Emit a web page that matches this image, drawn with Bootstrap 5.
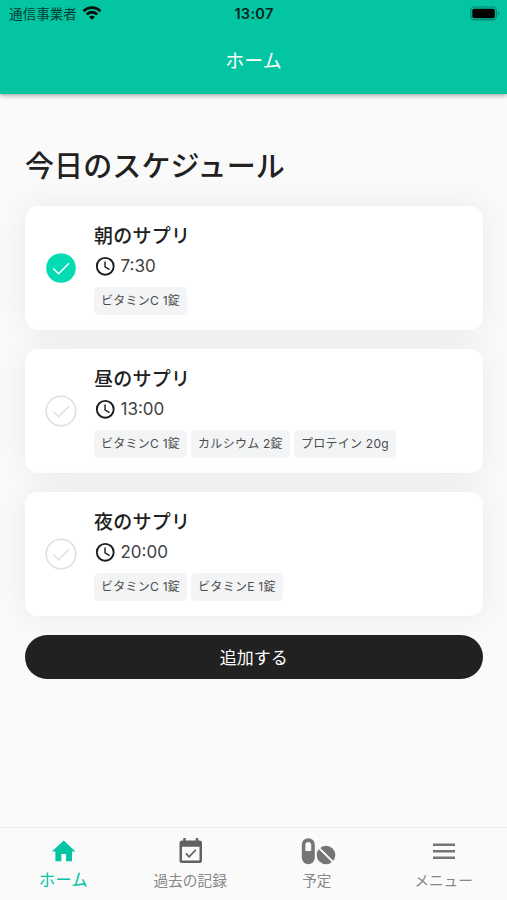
<!DOCTYPE html>
<html lang="ja">
<head>
<meta charset="utf-8">
<meta name="viewport" content="width=device-width, initial-scale=1">
<title>ホーム</title>
<link href="https://cdn.jsdelivr.net/npm/bootstrap@5.3.0/dist/css/bootstrap.min.css" rel="stylesheet">
<style>
body{font-family:Inter,"Noto Sans CJK JP",sans-serif;background:#fafafa;color:#212121;height:900px;overflow:hidden}
.app-top{background:#03c5a2;height:94px;box-shadow:0 1px 5px rgba(0,0,0,.42);z-index:2}
.status{height:27px;padding:0 7px 0 9px;font-size:13.6px;color:#053d34}
.status-label{padding-top:2px}
.status-time{font-weight:600;font-size:14.5px;letter-spacing:.3px;color:#04231e;padding-right:1px}
.app-title{height:65px;padding-top:5px;font-size:19px;color:#fff}
.page{padding:0 24.5px 0 25px}
.heading{font-size:29px;line-height:44px;font-weight:500;letter-spacing:.1px;margin:51px 0 17px}
.stack{gap:19px}
.dose{height:124px;border-radius:13px;padding:17px 20px 0;gap:17px;box-shadow:0 0 34px rgba(0,0,0,.07);background:#fff}
.dose-check{margin-top:29px}
.dose-title{font-size:19px;line-height:28px;font-weight:500;letter-spacing:.25px}
.dose-time{font-size:17px;line-height:22px;height:22px;margin-top:4px;gap:4px;color:#424242}
.chips{gap:4px;margin-top:10px}
.chip{height:28px;line-height:28px;padding:0 7px;border-radius:5px;background:#f2f4f6;color:#4c4c4c;font-size:12px;letter-spacing:.26px;white-space:nowrap}
.add{height:44px;background:#212121;color:#fff;font-size:17px;margin-top:19px;padding-top:4px}
.tabs{height:73px;background:#fafafa;border-top:1px solid #ececec;color:#757575}
.tab{font-size:14.7px;color:#757575;padding-top:9px}
.tab svg{height:30px}
.tab span{line-height:22px;margin-top:3px;color:#888}
.tab.on span{font-size:16.5px;color:#03c5a2;margin-top:2px}
</style>
<script src="https://cdn.jsdelivr.net/npm/bootstrap@5.3.0/dist/js/bootstrap.bundle.min.js"></script>
</head>
<body class="d-flex flex-column">
<svg class="d-none">
  <symbol id="clock" viewBox="0 0 24 24"><path d="M12 2a10 10 0 1 0 0 20 10 10 0 0 0 0-20zm0 18a8 8 0 1 1 0-16 8 8 0 0 1 0 16zM12.5 7H11v6l5.2 3.2.8-1.3-4.5-2.7z" fill="#1c1c1c"/></symbol>
  <symbol id="todo" viewBox="0 0 32 32"><circle cx="16" cy="16" r="14.8" fill="none" stroke="#dfdfdf" stroke-width="1.6"/><path d="M8.3 16.5l5.3 5.2L24 11.2" fill="none" stroke="#dfdfdf" stroke-width="1.5"/></symbol>
</svg>
<header class="app-top position-relative flex-shrink-0">
  <div class="status row g-0 align-items-center">
    <div class="col d-flex align-items-center"><span class="status-label">通信事業者</span>
      <svg class="ms-1" width="22" height="18" viewBox="0 0 22 18" fill="none" stroke="#04130f" stroke-width="2.9"><path d="M2.6 7.2a11.6 11.6 0 0 1 16.8 0M5.7 10.5a7.3 7.3 0 0 1 10.6 0"/><path d="M8.1 12.9a4 4 0 0 1 5.8 0L11 15.8z" fill="#04130f" stroke="none"/></svg>
    </div>
    <div class="col-auto status-time">13:07</div>
    <div class="col d-flex justify-content-end"><svg width="30" height="15" viewBox="0 0 30 15"><rect x=".8" y="1" width="25.5" height="12.8" rx="3.6" fill="none" stroke="#09826d" stroke-width="1.2"/><rect x="2.3" y="2.7" width="22.5" height="9.5" rx="2" fill="#000"/><path d="M27.8 5.2q2.5 2.2 0 4.4z" fill="#09826d"/></svg></div>
  </div>
  <div class="app-title d-flex align-items-center justify-content-center">ホーム</div>
</header>
<main class="page flex-grow-1">
  <h1 class="heading">今日のスケジュール</h1>
  <div class="stack d-flex flex-column">
    <section class="dose d-flex align-items-start">
      <svg class="dose-check flex-shrink-0" width="32" height="32" viewBox="0 0 32 32"><circle cx="16" cy="16" r="14.8" fill="#03dcb2"/><path d="M8.3 16.5l5.3 5.2L24 11.2" fill="none" stroke="#fff" stroke-width="1.6"/></svg>
      <div><div class="dose-title">朝のサプリ</div>
        <div class="dose-time d-flex align-items-center"><svg width="22.5" height="22.5"><use href="#clock"/></svg><span>7:30</span></div>
        <div class="chips d-flex"><span class="chip">ビタミンC 1錠</span></div></div>
    </section>
    <section class="dose d-flex align-items-start">
      <svg class="dose-check flex-shrink-0" width="32" height="32"><use href="#todo"/></svg>
      <div><div class="dose-title">昼のサプリ</div>
        <div class="dose-time d-flex align-items-center"><svg width="22.5" height="22.5"><use href="#clock"/></svg><span>13:00</span></div>
        <div class="chips d-flex"><span class="chip">ビタミンC 1錠</span><span class="chip">カルシウム 2錠</span><span class="chip">プロテイン 20g</span></div></div>
    </section>
    <section class="dose d-flex align-items-start">
      <svg class="dose-check flex-shrink-0" width="32" height="32"><use href="#todo"/></svg>
      <div><div class="dose-title">夜のサプリ</div>
        <div class="dose-time d-flex align-items-center"><svg width="22.5" height="22.5"><use href="#clock"/></svg><span>20:00</span></div>
        <div class="chips d-flex"><span class="chip">ビタミンC 1錠</span><span class="chip">ビタミンE 1錠</span></div></div>
    </section>
  </div>
  <button type="button" class="add w-100 border-0 rounded-pill d-flex align-items-center justify-content-center position-relative">追加する</button>
</main>
<nav class="tabs row g-0 flex-shrink-0 position-relative">
  <a class="tab on col d-flex flex-column align-items-center text-decoration-none" href="#"><svg width="30" height="30" viewBox="0 0 30 30" fill="#03c5a2"><path d="M13.3 24.300v-7.200h4.800v7.200H24v-9.800h3.500L15.700 3.500 3.900 14.500h3.500v9.800z"/></svg><span>ホーム</span></a>
  <a class="tab col d-flex flex-column align-items-center text-decoration-none" href="#"><svg width="30" height="30" viewBox="-.6 .2 24 24" fill="#616161"><path fill-rule="evenodd" d="M19 3h-1V1h-2v2H8V1H6v2H5a2 2 0 0 0-2 2v14a2 2 0 0 0 2 2h14a2 2 0 0 0 2-2V5a2 2 0 0 0-2-2zm0 16H5V8h14zM16.500 10.900l-.9-.9-4.900 4.900-2.100-2.100-1 1 3.100 3.200z"/></svg><span>過去の記録</span></a>
  <a class="tab col d-flex flex-column align-items-center text-decoration-none" href="#"><svg width="38" height="30" viewBox="0 0 38 30"><rect x="3.800" y="1.200" width="13" height="26" rx="6.500" fill="#757575"/><path d="M7.400 14V8a2.900 2.900 0 0 1 5.800 0v6z" fill="#fafafa"/><circle cx="28" cy="18" r="9.300" fill="#757575"/><path d="M18.600 8.600l18.800 18.800" stroke="#fafafa" stroke-width="2"/></svg><span>予定</span></a>
  <a class="tab col d-flex flex-column align-items-center text-decoration-none" href="#"><svg width="30" height="30" viewBox="0 0 30 30" fill="#757575"><path d="M4 6.500h22V9H4zM4 13h22v2.500H4zM4 19.500h22V22H4z"/></svg><span>メニュー</span></a>
</nav>
</body>
</html>
